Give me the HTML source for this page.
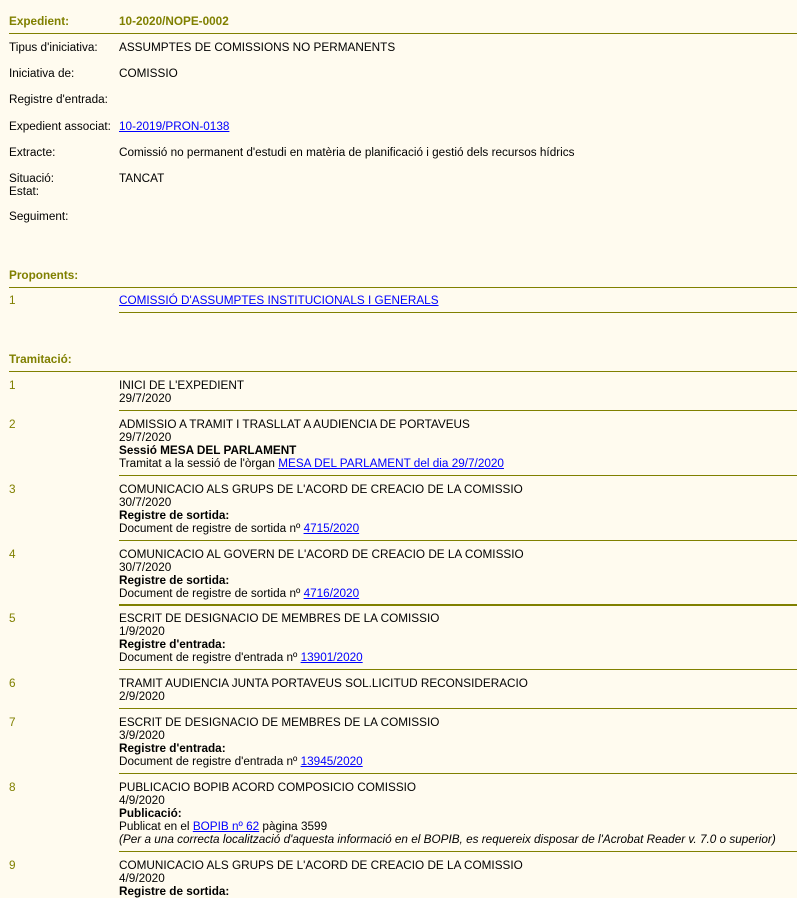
<!DOCTYPE html>
<html><head><meta charset="utf-8"><style>
body{margin:0;background:#fffbef;font-family:"Liberation Sans",Arial,sans-serif;font-size:11.75px;color:#000;width:797px;height:893px;overflow:hidden;position:relative}
.t{position:absolute;line-height:13px;white-space:nowrap}
.o{color:#808000;font-weight:bold}
.n{color:#808000}
.l{position:absolute;height:1px;background:#808000;right:0}
a{color:#00f;text-decoration:underline}
b{font-weight:bold}
</style></head><body>
<div class="t o" style="left:9px;top:15px">Expedient:</div>
<div class="t o" style="left:119px;top:15px">10-2020/NOPE-0002</div>
<div class="l" style="left:9px;top:33px"></div>
<div class="t" style="left:9px;top:41px">Tipus d'iniciativa:</div>
<div class="t" style="left:119px;top:41px">ASSUMPTES DE COMISSIONS NO PERMANENTS</div>
<div class="t" style="left:9px;top:67px">Iniciativa de:</div>
<div class="t" style="left:119px;top:67px">COMISSIO</div>
<div class="t" style="left:9px;top:93px">Registre d'entrada:</div>
<div class="t" style="left:9px;top:120px">Expedient associat:</div>
<div class="t" style="left:119px;top:120px"><a>10-2019/PRON-0138</a></div>
<div class="t" style="left:9px;top:146px">Extracte:</div>
<div class="t" style="left:119px;top:146px">Comissió no permanent d'estudi en matèria de planificació i gestió dels recursos hídrics</div>
<div class="t" style="left:9px;top:172px">Situació:<br>Estat:</div>
<div class="t" style="left:119px;top:172px">TANCAT</div>
<div class="t" style="left:9px;top:210px">Seguiment:</div>

<div class="t o" style="left:9px;top:269px">Proponents:</div>
<div class="l" style="left:9px;top:287px"></div>
<div class="t n" style="left:9px;top:294px">1</div>
<div class="t" style="left:119px;top:294px"><a>COMISSIÓ D'ASSUMPTES INSTITUCIONALS I GENERALS</a></div>
<div class="l" style="left:119px;top:312px"></div>

<div class="t o" style="left:9px;top:353px">Tramitació:</div>
<div class="l" style="left:9px;top:371px"></div>

<div class="t n" style="left:9px;top:379px">1</div>
<div class="t" style="left:119px;top:379px">INICI DE L'EXPEDIENT<br>29/7/2020</div>
<div class="l" style="left:119px;top:410px"></div>

<div class="t n" style="left:9px;top:418px">2</div>
<div class="t" style="left:119px;top:418px">ADMISSIO A TRAMIT I TRASLLAT A AUDIENCIA DE PORTAVEUS<br>29/7/2020<br><b>Sessió MESA DEL PARLAMENT</b><br>Tramitat a la sessió de l'òrgan <a>MESA DEL PARLAMENT del dia 29/7/2020</a></div>
<div class="l" style="left:119px;top:475px"></div>

<div class="t n" style="left:9px;top:483px">3</div>
<div class="t" style="left:119px;top:483px">COMUNICACIO ALS GRUPS DE L'ACORD DE CREACIO DE LA COMISSIO<br>30/7/2020<br><b>Registre de sortida:</b><br>Document de registre de sortida nº <a>4715/2020</a></div>
<div class="l" style="left:119px;top:540px"></div>

<div class="t n" style="left:9px;top:548px">4</div>
<div class="t" style="left:119px;top:548px">COMUNICACIO AL GOVERN DE L'ACORD DE CREACIO DE LA COMISSIO<br>30/7/2020<br><b>Registre de sortida:</b><br>Document de registre de sortida nº <a>4716/2020</a></div>
<div class="l" style="left:119px;top:604px;height:2px"></div>

<div class="t n" style="left:9px;top:612px">5</div>
<div class="t" style="left:119px;top:612px">ESCRIT DE DESIGNACIO DE MEMBRES DE LA COMISSIO<br>1/9/2020<br><b>Registre d'entrada:</b><br>Document de registre d'entrada nº <a>13901/2020</a></div>
<div class="l" style="left:119px;top:669px"></div>

<div class="t n" style="left:9px;top:677px">6</div>
<div class="t" style="left:119px;top:677px">TRAMIT AUDIENCIA JUNTA PORTAVEUS SOL.LICITUD RECONSIDERACIO<br>2/9/2020</div>
<div class="l" style="left:119px;top:708px"></div>

<div class="t n" style="left:9px;top:716px">7</div>
<div class="t" style="left:119px;top:716px">ESCRIT DE DESIGNACIO DE MEMBRES DE LA COMISSIO<br>3/9/2020<br><b>Registre d'entrada:</b><br>Document de registre d'entrada nº <a>13945/2020</a></div>
<div class="l" style="left:119px;top:773px"></div>

<div class="t n" style="left:9px;top:781px">8</div>
<div class="t" style="left:119px;top:781px">PUBLICACIO BOPIB ACORD COMPOSICIO COMISSIO<br>4/9/2020<br><b>Publicació:</b><br>Publicat en el <a>BOPIB nº 62</a> pàgina 3599<br><i>(Per a una correcta localització d'aquesta informació en el BOPIB, es requereix disposar de l'Acrobat Reader v. 7.0 o superior)</i></div>
<div class="l" style="left:119px;top:851px"></div>

<div class="t n" style="left:9px;top:859px">9</div>
<div class="t" style="left:119px;top:859px">COMUNICACIO ALS GRUPS DE L'ACORD DE CREACIO DE LA COMISSIO<br>4/9/2020<br><b>Registre de sortida:</b></div>
</body></html>
